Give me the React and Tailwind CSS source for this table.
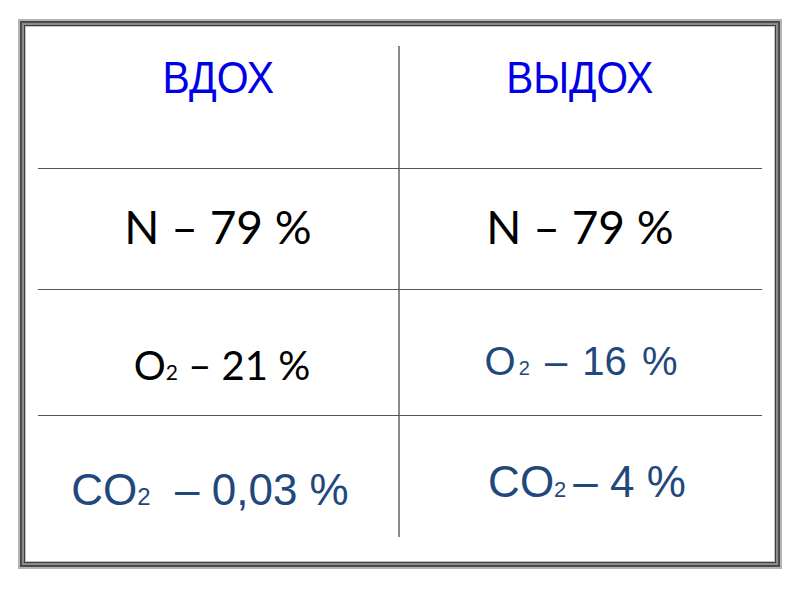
export default function App() {
  const arial = { fontFamily: '"Liberation Sans", Arial, sans-serif' };
  const calibri = { fontFamily: 'Lato, "Open Sans", sans-serif' };

  return (
    <div className="w-[800px] h-[600px] bg-white pt-[19px] pl-[18px]">
      {/* Slide frame */}
      <div className="w-[764px] h-[550px] border-2 border-[#b4b4b4]">
        <div className="w-full h-full border-2 border-[#4a4a4a]">
          <div className="w-full h-full border-2 border-[#8c8c8c]">
            <div className="w-full h-full border border-[#3c3c3c]">
              <div className="w-full h-full border border-[#c4c4c4] bg-white pl-[12px] pr-[12px] pt-[19px]">
                {/* Header row */}
                <div className="grid grid-cols-[362px_360px] h-[123px] border-b border-[#555]">
                  <div className="flex justify-center pt-[9px] border-r-2 border-[#8a8a8a]">
                    <span className="inline-block leading-none text-[45px] text-[#0000e6] scale-x-[0.91]" style={arial}>ВДОХ</span>
                  </div>
                  <div className="flex justify-center pt-[9px]">
                    <span className="inline-block leading-none text-[45px] text-[#0000e6] scale-x-[0.9]" style={arial}>ВЫДОХ</span>
                  </div>
                </div>

                {/* Nitrogen */}
                <div className="grid grid-cols-[362px_360px] h-[121px] border-b border-[#555]">
                  <div className="flex justify-center pt-[35px] border-r-2 border-[#8a8a8a]">
                    <span className="leading-none text-[46px] text-black" style={calibri}>N – 79 %</span>
                  </div>
                  <div className="flex justify-center pt-[35px]">
                    <span className="leading-none text-[46px] text-black" style={calibri}>N – 79 %</span>
                  </div>
                </div>

                {/* Oxygen */}
                <div className="grid grid-cols-[362px_360px] h-[126px] border-b border-[#555]">
                  <div className="flex justify-center pt-[55px] pl-[8px] border-r-2 border-[#8a8a8a]">
                    <span className="leading-none text-[40px] text-black" style={calibri}>
                      O<span className="text-[21px]">2</span> – 21 %
                    </span>
                  </div>
                  <div className="flex justify-center pt-[51px] pl-[2px]">
                    <span className="leading-none text-[40px] text-[#1f497d] [word-spacing:4px]" style={arial}>
                      O<span className="text-[20px] ml-[3px]">2</span> – 16 %
                    </span>
                  </div>
                </div>

                {/* Carbon dioxide */}
                <div className="grid grid-cols-[362px_360px] h-[121px]">
                  <div className="flex justify-center pt-[52px] pr-[16px] border-r-2 border-[#8a8a8a]">
                    <span className="leading-none text-[44px] text-[#1f497d] whitespace-pre" style={arial}>
                      CO<span className="text-[24px]">2</span>  – 0,03 %
                    </span>
                  </div>
                  <div className="flex justify-center pt-[44px] pl-[14px]">
                    <span className="leading-none text-[44px] text-[#1f497d]" style={arial}>
                      CO<span className="text-[22px] mr-[7px]">2</span>– 4 %
                    </span>
                  </div>
                </div>
              </div>
            </div>
          </div>
        </div>
      </div>
    </div>
  );
}
